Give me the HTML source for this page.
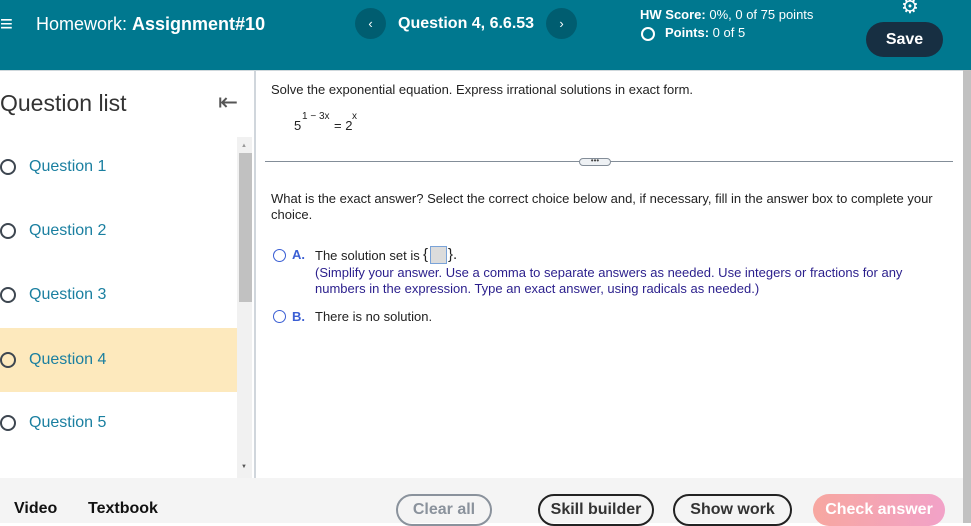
<!DOCTYPE html>
<html><head><meta charset="utf-8"><style>
*{margin:0;padding:0;box-sizing:border-box}
body{width:971px;height:523px;overflow:hidden;font-family:"Liberation Sans",Arial,sans-serif;background:#fff;position:relative}
.hdr{position:absolute;left:0;top:0;width:971px;height:70px;background:#00788f;color:#fff}
.a{position:absolute}
.circ{position:absolute;border-radius:50%}
.q{position:absolute;left:0;width:237px;height:64px;font-size:16px;color:#1a7fa0}
.q .o{position:absolute;left:0;top:24px;width:16px;height:16px;border:2px solid #3d4650;border-radius:50%}
.q span{position:absolute;left:29px;top:23px}
.t{font-size:13px;color:#222}
.btn{position:absolute;top:494px;height:32px;border-radius:16px;border:2px solid #222;font-size:16px;font-weight:bold;text-align:center;line-height:27px;color:#333}
</style></head><body>
<div class="hdr">
 <div class="a" style="left:0;top:11px;font-size:22px">&#8801;</div>
 <div class="a" style="left:36px;top:14px;font-size:18px">Homework: <b>Assignment#10</b></div>
 <div class="circ" style="left:355px;top:8px;width:31px;height:31px;background:#005d70;text-align:center;line-height:31px;font-size:13px">&#8249;</div>
 <div class="a" style="left:398px;top:15px;font-size:16px;font-weight:bold">Question 4, 6.6.53</div>
 <div class="circ" style="left:546px;top:8px;width:31px;height:31px;background:#005d70;text-align:center;line-height:31px;font-size:13px">&#8250;</div>
 <div class="a" style="left:640px;top:7px;font-size:13px"><b>HW Score:</b> 0%, 0 of 75 points</div>
 <div class="circ" style="left:641px;top:27px;width:14px;height:14px;border:2px solid #fff"></div>
 <div class="a" style="left:665px;top:25px;font-size:13px"><b>Points:</b> 0 of 5</div>
 <div class="a" style="left:901px;top:-6px;font-size:20px">&#9881;</div>
 <div class="a" style="left:866px;top:22px;width:77px;height:35px;border-radius:18px;background:#172f42;font-weight:bold;font-size:16px;text-align:center;line-height:35px">Save</div>
</div>
<div class="a" style="left:0;top:70px;width:963px;height:1px;background:#cfd8dc"></div>
<div class="a" style="left:0;top:90px;font-size:23px;color:#333">Question list</div>
<div class="a" style="left:218px;top:88px;font-size:24px;color:#555">&#8676;</div>
<div class="a" style="left:254px;top:71px;width:2px;height:407px;background:#d0d6dc"></div>
<div class="a" style="left:237px;top:137px;width:15px;height:341px;background:#f1f1f1"></div>
<div class="a" style="left:239px;top:153px;width:13px;height:149px;background:#c1c1c1"></div>
<div class="a" style="left:241px;top:143px;font-size:6px;color:#999">&#9650;</div>
<div class="a" style="left:241px;top:464px;font-size:6px;color:#555">&#9660;</div>
<div class="q" style="top:135px"><div class="o"></div><span>Question 1</span></div>
<div class="q" style="top:199px"><div class="o"></div><span>Question 2</span></div>
<div class="q" style="top:263px"><div class="o"></div><span>Question 3</span></div>
<div class="q" style="top:328px;background:#fde9bd"><div class="o"></div><span>Question 4</span></div>
<div class="q" style="top:391px"><div class="o"></div><span>Question 5</span></div>
<div class="a t" style="left:271px;top:82px">Solve the exponential equation. Express irrational solutions in exact form.</div>
<div class="a t" style="left:294px;top:118px">5</div>
<div class="a" style="left:302px;top:111px;font-size:10px;color:#222">1 &#8722; 3x</div>
<div class="a t" style="left:334px;top:118px">= 2</div>
<div class="a" style="left:352px;top:111px;font-size:10px;color:#222">x</div>
<div class="a" style="left:265px;top:161px;width:688px;height:1px;background:#838d98"></div>
<div class="a" style="left:579px;top:158px;width:32px;height:8px;border:1px solid #838d98;border-radius:4px;background:#eef1f4;font-size:8px;line-height:3px;text-align:center;color:#444">&bull;&bull;&bull;</div>
<div class="a t" style="left:271px;top:191px;width:680px;line-height:16px">What is the exact answer? Select the correct choice below and, if necessary, fill in the answer box to complete your choice.</div>
<div class="circ" style="left:273px;top:249px;width:13px;height:13px;border:1.5px solid #3b5fd4"></div>
<div class="a" style="left:292px;top:247px;font-size:13px;font-weight:bold;color:#3b5fd4">A.</div>
<div class="a t" style="left:315px;top:248px">The solution set is</div>
<div class="a t" style="left:423px;top:246px;font-size:15px">{</div>
<div class="a" style="left:430px;top:246px;width:17px;height:18px;background:#dcdcdc;border:1px solid #7aa3d8"></div>
<div class="a t" style="left:448px;top:246px;font-size:15px">}.</div>
<div class="a" style="left:315px;top:265px;font-size:13px;color:#2a1e8c;line-height:16px;width:600px">(Simplify your answer. Use a comma to separate answers as needed. Use integers or fractions for any numbers in the expression. Type an exact answer, using radicals as needed.)</div>
<div class="circ" style="left:273px;top:310px;width:13px;height:13px;border:1.5px solid #3b5fd4"></div>
<div class="a" style="left:292px;top:309px;font-size:13px;font-weight:bold;color:#3b5fd4">B.</div>
<div class="a t" style="left:315px;top:309px">There is no solution.</div>
<div class="a" style="left:963px;top:70px;width:8px;height:453px;background:#c1c1c1"></div>
<div class="a" style="left:0;top:478px;width:963px;height:45px;background:#f4f4f4"></div>
<div class="a" style="left:14px;top:500px;font-size:16px;font-weight:bold;color:#111">Video</div>
<div class="a" style="left:88px;top:500px;font-size:16px;font-weight:bold;color:#111">Textbook</div>
<div class="btn" style="left:396px;width:96px;border-color:#8a929c;color:#8a929c">Clear all</div>
<div class="btn" style="left:538px;width:116px">Skill builder</div>
<div class="btn" style="left:673px;width:119px">Show work</div>
<div class="btn" style="left:813px;width:132px;border:none;line-height:31px;color:#fff;background:linear-gradient(90deg,#f7a7a0,#f2a2c8)">Check answer</div>
</body></html>
